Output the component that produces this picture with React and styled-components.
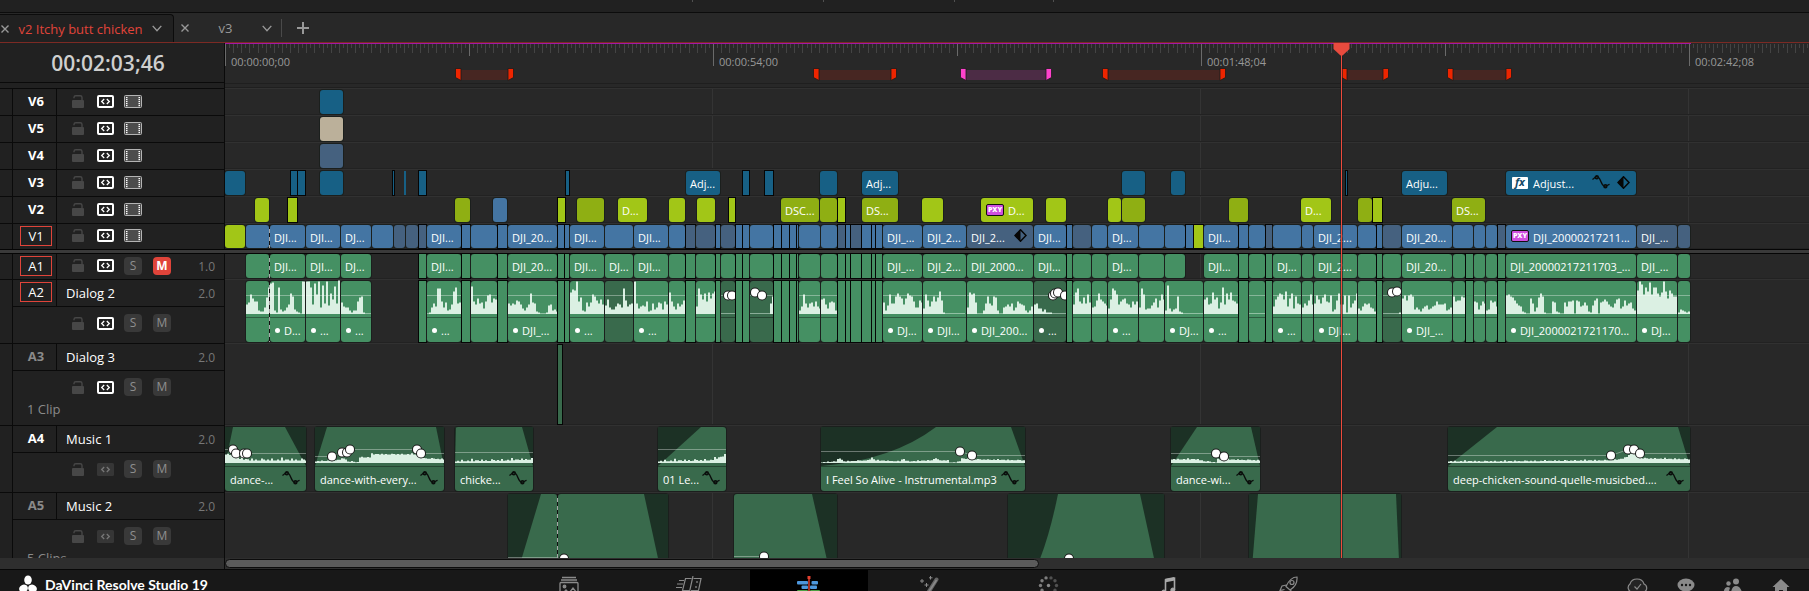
import React from "react";
import styled, { createGlobalStyle, css } from "styled-components";

const HEAD = 225;

const tones = {
  teal: "#176085",
  blue: "#4475a3",
  slate: "#45617f",
  lime: "#a2c617",
  olive: "#8faf13",
  sand: "#bbb09a",
  green: "#459063",
  forest: "#396a4c",
};

/* ---------- timeline data: x positions in pixels at the current zoom ---------- */

const clip = (start, end, tone, label, extra = {}) => ({ start, end, tone, label, ...extra });
const thin = (start, end, tone) => ({ start, end, tone, thin: true });

const V6 = [clip(320, 343, "teal")];
const V5 = [clip(320, 343, "sand")];
const V4 = [clip(320, 343, "slate")];

const V3 = [
  clip(225, 245, "teal"), thin(291, 297, "teal"), thin(298, 305, "teal"), clip(320, 343, "teal"),
  thin(393, 394, "teal"), { start: 404, end: 406, tone: "teal", bare: true }, thin(419, 426, "teal"),
  thin(566, 569, "teal"), clip(686, 720, "teal", "Adj..."), thin(743, 749, "teal"), thin(765, 773, "teal"),
  clip(820, 837, "teal"), clip(862, 898, "teal", "Adj..."), clip(1122, 1145, "teal"), clip(1171, 1185, "teal"),
  thin(1346, 1347, "teal"), clip(1402, 1447, "teal", "Adju..."),
  clip(1506, 1636, "teal", "Adjust...", { badge: "fx", curve: true, keyed: true }),
];

const V2 = [
  clip(255, 269, "lime"), thin(288, 297, "lime"), clip(455, 470, "olive"), clip(493, 507, "blue"),
  thin(558, 565, "lime"), clip(577, 604, "olive"), clip(618, 647, "lime", "D..."), clip(669, 685, "lime"),
  clip(697, 715, "lime"), thin(729, 735, "lime"), clip(781, 819, "olive", "DSC..."), clip(820, 837, "olive"),
  thin(838, 845, "lime"), clip(862, 898, "olive", "DS..."), clip(922, 943, "lime"),
  clip(981, 1033, "lime", "D...", { badge: "PXY" }), clip(1046, 1066, "lime"), clip(1108, 1121, "lime"),
  clip(1122, 1145, "olive"), clip(1229, 1248, "olive"), clip(1301, 1331, "lime", "D..."),
  clip(1358, 1372, "olive"), thin(1373, 1382, "lime"), clip(1452, 1485, "olive", "DS..."),
];

const V1 = [
  clip(225, 245, "lime"), clip(246, 269, "blue", "", { through: true }), clip(270, 305, "blue", "DJI..."),
  clip(306, 340, "blue", "DJI..."), clip(341, 371, "blue", "DJ..."), clip(372, 393, "blue"),
  clip(394, 405, "slate"), clip(406, 418, "slate"), thin(419, 426, "slate"), clip(427, 461, "blue", "DJI..."),
  thin(462, 470, "blue"), clip(471, 497, "blue"), thin(498, 507, "blue"), clip(508, 557, "blue", "DJI_20..."),
  thin(558, 564, "blue"), thin(565, 569, "blue"), clip(570, 604, "blue", "DJI..."), clip(605, 633, "blue"),
  clip(634, 668, "blue", "DJI..."), clip(669, 685, "blue"), thin(686, 695, "slate"), clip(696, 715, "slate"),
  thin(716, 720, "blue"), clip(721, 735, "slate"), thin(736, 742, "blue"), thin(743, 749, "blue"),
  clip(750, 773, "blue"), thin(774, 781, "blue"), thin(782, 789, "blue"), thin(790, 796, "blue"),
  thin(797, 798, "blue"), clip(799, 820, "blue"), clip(821, 837, "blue"), thin(838, 845, "slate"),
  thin(846, 850, "blue"), thin(851, 861, "slate"), thin(862, 871, "blue"), thin(872, 875, "blue"),
  thin(876, 882, "blue"), clip(883, 922, "blue", "DJI_..."), clip(923, 966, "blue", "DJI_2..."),
  clip(967, 1033, "slate", "DJI_2...", { keyed: true }), clip(1034, 1066, "blue", "DJI..."),
  thin(1067, 1072, "blue"), clip(1073, 1091, "slate"), clip(1092, 1107, "blue"), clip(1108, 1138, "blue", "DJ..."),
  clip(1139, 1164, "blue"), clip(1165, 1185, "blue"), thin(1186, 1193, "blue"), thin(1194, 1203, "lime"),
  clip(1204, 1238, "blue", "DJI..."), thin(1239, 1248, "blue"), clip(1249, 1265, "blue"),
  thin(1266, 1272, "slate"), clip(1273, 1301, "blue"), clip(1302, 1313, "blue"),
  clip(1314, 1357, "blue", "DJI_2..."), clip(1358, 1376, "blue"), thin(1377, 1382, "blue"),
  clip(1383, 1401, "slate"), clip(1402, 1452, "blue", "DJI_20..."), clip(1453, 1473, "blue"),
  clip(1474, 1485, "blue"), clip(1486, 1497, "blue"), thin(1498, 1505, "slate"),
  clip(1506, 1636, "blue", "DJI_20000217211...", { badge: "PXY" }), clip(1637, 1677, "slate", "DJI_..."),
  clip(1678, 1690, "slate"),
];

/* Dialog takes: [start, end, wave, A1 label, A2 label, extra]; no wave means a sliver. */
const takes = [
  [246, 269, "9bjfcc3226gq", "", "", { through: true }],
  [270, 305, "uv31q42369kh4210wwhw", "DJI...", "D..."],
  [306, 340, "wwq9ujw6saw8keraxnqr", "DJI...", "..."],
  [341, 371, "b7663133cgh100000", "DJ...", "..."],
  [419, 426],
  [427, 461, "016a7ppc6b349mqabt", "DJI...", "..."],
  [462, 470],
  [471, 497, "rc9fab5cijbfe"],
  [498, 507],
  [508, 557, "a8a9dc95369kba21000189342", "DJI_20...", "DJI_..."],
  [558, 564], [565, 569],
  [570, 604, "lonwcg32b7bjhdae9", "DJI...", "..."],
  [605, 633, "8e6447a96pd79a", "DJ...", "", { dim: true }],
  [634, 668, "wa5787c23a46ba4c9", "DJI...", "..."],
  [669, 685, "lc74a79d"],
  [686, 695],
  [696, 715, "7pjekclfkm"],
  [716, 720],
  [721, 735, "0000000", "", "", { dim: true, dots: [[728, 14], [732, 14]] }],
  [736, 742], [743, 749],
  [750, 773, "0000000000ahw", "", "", { dim: true, dots: [[755, 11], [762, 14]] }],
  [774, 781], [782, 789], [790, 796], [797, 798],
  [799, 820, "37ja6ab7c75"],
  [821, 837, "ef95bcb3"],
  [838, 845], [846, 850], [851, 861], [862, 871], [872, 875], [876, 882],
  [883, 922, "b38jaahkhf9fkihc66db", "DJI_...", "DJ..."],
  [923, 966, "5jd7chcgmd10000000000", "DJI_2...", "DJI..."],
  [967, 1033, "6ljkb0003aha8hg3006797a36ca983137", "DJI_2000...", "DJI_200..."],
  [1034, 1066, "9a55241110000000", "DJI...", "...", { dim: true, dots: [[1053, 14], [1055, 12], [1058, 11], [1065, 14]] }],
  [1067, 1072],
  [1073, 1091, "9lpcagajb"],
  [1092, 1107, "67dkeca8"],
  [1108, 1138, "5epnj9cefa96c9c", "DJ...", "..."],
  [1139, 1164, "6pj4558bf6dje"],
  [1165, 1203, "3s5245h2100000000000", "", "DJ...", { shortEnd: 1185 }],
  [1204, 1238, "eg9aleg5bq9keldca", "DJI...", "..."],
  [1239, 1248],
  [1249, 1265, "00000000"],
  [1266, 1272],
  [1273, 1301, "7ehkjem7fk5ha9", "DJ...", "..."],
  [1302, 1313, "6a8dj9"],
  [1314, 1357, "aieagjcbi24dk99i1i6adk", "DJI_2...", "DJI..."],
  [1358, 1376, "537a9a652"],
  [1377, 1382],
  [1383, 1401, "000000001", "", "", { dim: true, dots: [[1392, 11], [1397, 10]] }],
  [1402, 1452, "fidijh46425784578c999a346", "DJI_20...", "DJI_..."],
  [1453, 1465, "hcddhg"],
  [1466, 1473],
  [1474, 1485, "cb48ca"],
  [1486, 1497, "34dbc7"],
  [1498, 1505],
  [1506, 1636, "ijhgda872100fa26gkh1000cb2100b7ccd0dc78b8218df0bcec976aef57d8ab53", "DJI_20000217211703_...", "DJI_2000021721170..."],
  [1637, 1677, "nwtjqmvjqqkhlwmfnkhh", "DJI_...", "DJ..."],
  [1678, 1690, "143212"],
];

const A1 = takes.map(([start, end, wave, label, , extra = {}]) =>
  wave ? clip(start, extra.shortEnd || end, "green", label, { through: extra.through }) : thin(start, end, "green"));

const A2 = takes.map(([start, end, wave, , label, extra = {}]) =>
  wave
    ? clip(start, end, extra.dim ? "forest" : "green", label, {
        bullet: Boolean(label), through: extra.through,
        audio: { height: 36, base: 33, bars: [...wave].map((c) => parseInt(c, 36)), level: [[start, 14], [end, 14]], dots: extra.dots },
      })
    : thin(start, end, "green"));

const A3 = [thin(558, 562, "forest")];

/* A music bed's bars: an envelope of [x, height] points with a little ripple on top. */
const ripple = [0, 1, 0, 2, 0, 0, 1, 0, 3, 0, 1, 1, 0, 2, 0, 1, 0, 0, 2, 1];
const bed = (points, rough = 1) => {
  const out = [];
  for (let x = points[0][0], i = 0; x < points[points.length - 1][0]; x += 2, i += 1) {
    const k = points.findIndex((p) => p[0] > x);
    const [x0, h0] = points[k - 1];
    const [x1, h1] = points[k];
    out.push(h0 + ((h1 - h0) * (x - x0)) / (x1 - x0) + ripple[i % ripple.length] * rough);
  }
  return out;
};
const music = (start, end, label, audio) =>
  clip(start, end, "forest", label, { curve: true, audio: { height: 39, base: 36, ...audio } });

const A4 = [
  music(225, 306, "dance-...", {
    bars: bed([[225, 8], [232, 7], [240, 3], [250, 2], [306, 2]]), fadeIn: 8, fadeOut: 21,
    level: [[225, 22], [233, 22], [236, 26], [306, 26]], dots: [[233, 22], [236, 26], [244, 26], [247, 26]],
  }),
  music(315, 444, "dance-with-every...", {
    bars: bed([[315, 1], [336, 2], [343, 4], [347, 1], [357, 0], [358, 5], [369, 5], [370, 8], [414, 8], [424, 4], [444, 3]], 0.4),
    fadeIn: 12, fadeOut: 8,
    level: [[315, 29], [332, 29], [342, 25], [350, 22], [417, 22], [422, 26], [444, 26]],
    dots: [[332, 29], [342, 25], [347, 25], [350, 22], [417, 22], [421, 26]],
  }),
  music(455, 533, "chicke...", { bars: bed([[455, 1], [510, 2], [533, 3]], 0.8), fadeIn: 1, fadeOut: 11, level: [[455, 25], [533, 25]] }),
  music(658, 726, "01 Le...", { bars: bed([[658, 1], [710, 2], [720, 5], [724, 7], [726, 1]], 0.8), fadeIn: 43, fadeOut: 0, level: [[658, 22], [726, 22]] }),
  music(821, 1025, "I Feel So Alive - Instrumental.mp3", {
    bars: bed([[821, 0], [835, 1], [839, 4], [843, 1], [868, 2], [871, 5], [874, 2], [899, 1], [902, 4], [906, 1], [932, 2], [934, 5], [938, 2], [948, 2], [949, 0], [958, 0], [961, 4], [970, 3], [1025, 2]], 0.3),
    fadeIn: 115, bend: true, fadeOut: 14,
    level: [[821, 24], [960, 24], [973, 28], [1025, 28]], dots: [[960, 24], [972, 28]],
  }),
  music(1171, 1260, "dance-wi...", {
    bars: bed([[1171, 3], [1196, 3], [1204, 1], [1215, 0], [1216, 3], [1260, 2]], 0.4), fadeIn: 26, fadeOut: 9,
    level: [[1171, 26], [1216, 26], [1224, 29], [1260, 29]], dots: [[1216, 26], [1224, 29]],
  }),
  music(1448, 1690, "deep-chicken-sound-quelle-musicbed....", {
    bars: bed([[1448, 1], [1500, 1], [1610, 2], [1624, 4], [1632, 10], [1642, 4], [1690, 3]], 0.4), fadeIn: 49, fadeOut: 12,
    level: [[1448, 28], [1611, 28], [1628, 22], [1634, 22], [1640, 26], [1690, 26]],
    dots: [[1611, 28], [1628, 22], [1634, 22], [1640, 26]],
  }),
];

const score = (start, end, audio, extra = {}) => clip(start, end, "forest", "", { audio: { height: 110, base: 106, bars: [], ...audio }, ...extra });
const A5 = [
  score(508, 557, { fadeIn: 33, fadeOut: 0, level: [[508, 63], [557, 63]] }, { through: true }),
  score(558, 668, { fadeIn: 0, fadeOut: 24, dots: [[564, 64]] }),
  score(734, 837, { fadeIn: 0, fadeOut: 25, level: [[734, 62], [764, 62]], dots: [[764, 62]] }),
  score(1008, 1164, { fadeIn: 50, bend: true, fadeOut: 24, dots: [[1069, 64]] }),
  score(1249, 1401, { fadeIn: 9, fadeOut: 5 }),
];

const tracks = [
  { id: "V6", kind: "video", size: 27, clips: V6 },
  { id: "V5", kind: "video", size: 27, clips: V5 },
  { id: "V4", kind: "video", size: 27, clips: V4 },
  { id: "V3", kind: "video", size: 27, clips: V3 },
  { id: "V2", kind: "video", size: 27, clips: V2 },
  { id: "V1", kind: "video", size: 26, clips: V1, armed: true },
];
const audioTracks = [
  { id: "A1", kind: "compact", size: 25, clips: A1, armed: true, muted: true, channels: "1.0" },
  { id: "A2", name: "Dialog 2", size: 64, clips: A2, armed: true, channels: "2.0" },
  { id: "A3", name: "Dialog 3", size: 82, clips: A3, faded: true, channels: "2.0", note: "1 Clip" },
  { id: "A4", name: "Music 1", size: 67, clips: A4, unlinked: true, channels: "2.0" },
  { id: "A5", name: "Music 2", size: 114, clips: A5, faded: true, unlinked: true, channels: "2.0", note: "5 Clips" },
];

const ranges = [
  { start: 455, end: 514 }, { start: 813, end: 897 }, { start: 960, end: 1052, pink: true },
  { start: 1102, end: 1226 }, { start: 1341, end: 1389 }, { start: 1447, end: 1512 },
];

const stamps = ["00:00:00;00", "00:00:54;00", "00:01:48;04", "00:02:42;08"];

/* ---------- styles ---------- */

const GlobalStyle = createGlobalStyle`
  * { box-sizing: border-box; }
  body { margin: 0; background: #282828; overflow: hidden; font-family: "Open Sans", "Noto Sans", sans-serif; color: #fff; }
  button { margin: 0; padding: 0; border: 0; background: none; font: inherit; color: inherit; }
  svg { display: block; flex: none; }
`;

const Shell = styled.div`
  display: flex;
  flex-direction: column;
  height: 100vh;
  overflow: hidden;
`;

const ToolStrip = styled.div`
  flex: none;
  display: flex;
  height: 13px;
  background: #212121;
  border-bottom: 1px solid #0c0c0c;
`;

const ToolMark = styled.span`
  width: 1px;
  height: 2px;
  background: #505050;
  margin-left: ${(p) => p.$gap}px;
`;

const TabBar = styled.nav`
  flex: none;
  display: flex;
  align-items: stretch;
  height: 30px;
  padding-top: 1px;
  border-bottom: 1px solid #7c2a24;
  background: #282828;
`;

const Tab = styled.div`
  display: flex;
  align-items: center;
  justify-content: space-between;
  padding: 0 ${(p) => (p.$active ? 11 : 9)}px 0 ${(p) => (p.$active ? 1 : 7)}px;
  width: ${(p) => (p.$active ? 174 : 107)}px;
  font-size: 13px;
  color: ${(p) => (p.$active ? "#e0443a" : "#999")};
  ${(p) => p.$active && css`
    background: #212121;
    border: 1px solid #0c0c0c;
    border-width: 1px 1px 0 0;
    border-radius: 0 4px 0 0;
  `}
`;

const TabIcon = styled.button`
  color: #999;
`;

const AddTab = styled.button`
  align-self: center;
  padding: 3px 15px;
  border-left: 1px solid #4a4a4a;
  color: #999;
`;

const Timeline = styled.main`
  position: relative;
  flex: 1;
  min-height: 0;
  overflow: hidden;
`;

const Row = styled.div`
  display: flex;
  height: ${(p) => p.$size}px;
`;

const RowHead = styled.div`
  flex: none;
  width: ${HEAD}px;
  background: #212121;
  border-right: 1px solid #0a0a0a;
`;

const Timecode = styled.output`
  display: flex;
  align-items: center;
  justify-content: center;
  height: 40px;
  padding-right: 8px;
  border-bottom: 1px solid #0a0a0a;
  font-size: 21px;
  font-weight: 600;
  color: #cfcfcf;
`;

const RulerArea = styled.div`
  flex: 1;
  min-width: 0;
  overflow: hidden;
  border-bottom: 1px solid #1f1f1f;
`;

const Ruler = styled.div`
  position: relative;
  height: 41px;
  border-bottom: 1px solid #1f1f1f;
`;

const RulerMarks = styled.svg`
  position: absolute;
  inset: 0;
`;

const Stamps = styled.div`
  display: flex;
  padding-top: 11px;
`;

const Stamp = styled.span`
  flex: none;
  width: 488px;
  padding-left: 6px;
  font-size: 11px;
  line-height: 16px;
  color: #989898;
`;

const TrackHead = styled.div`
  flex: none;
  display: flex;
  width: ${HEAD}px;
  overflow: hidden;
  background: #212121;
  border-right: 1px solid #0a0a0a;
  border-top: ${(p) => (p.$flush ? 0 : 1)}px solid #0a0a0a;
`;

const Gutter = styled.div`
  flex: none;
  width: 13px;
  border-right: 1px solid #0a0a0a;
`;

const HeadBody = styled.div`
  flex: 1;
  display: flex;
  flex-direction: column;
`;

const HeadLine = styled.div`
  display: flex;
  flex: ${(p) => (p.$named ? "none" : "1")};
  height: ${(p) => (p.$named ? "27px" : "auto")};
  border-bottom: ${(p) => (p.$named ? 1 : 0)}px solid #0a0a0a;
`;

const IdCell = styled.div`
  flex: none;
  display: flex;
  align-items: center;
  justify-content: center;
  width: 44px;
  padding: 0 0 2px 3px;
  border-right: 1px solid #0a0a0a;
`;

const TrackId = styled.button`
  width: 32px;
  height: 20px;
  line-height: 18px;
  font-size: 13px;
  font-weight: ${(p) => (p.$armed ? 500 : 700)};
  color: ${(p) => (p.$faded ? "#8a8a8a" : "#fff")};
  border: 1px solid ${(p) => (p.$armed ? "#e0443a" : "transparent")};
`;

const NameCell = styled.div`
  flex: 1;
  display: flex;
  align-items: center;
  justify-content: space-between;
  padding: 0 9px;
  font-size: 13px;
`;

const Channels = styled.span`
  align-self: center;
  padding-right: ${(p) => (p.$inline ? 9 : 0)}px;
  font-size: 12px;
  color: #777;
`;

const Controls = styled.div`
  display: flex;
  align-items: center;
  flex: ${(p) => (p.$inline ? 1 : "none")};
  height: ${(p) => (p.$inline ? "auto" : "34px")};
  padding: 0 8px 2px ${(p) => (p.$inline ? 15 : 59)}px;
`;

const Control = styled.button`
  margin-right: ${(p) => p.$gap}px;
`;

const LetterButton = styled.button`
  width: 18px;
  height: 18px;
  margin-right: 11px;
  border-radius: 4px;
  font-size: 12px;
  line-height: 18px;
  text-align: center;
  font-weight: ${(p) => (p.$on ? 700 : 500)};
  color: ${(p) => (p.$on ? "#fff" : "#8f8f8f")};
  background: ${(p) => (p.$on ? "#e0443a" : "#393939")};
`;

const SubPanel = styled.div`
  display: flex;
  flex-direction: column;
`;

const Note = styled.span`
  padding-left: 14px;
  margin-top: -5px;
  font-size: 13px;
  line-height: 18px;
  color: #8a8a8a;
`;

const Lane = styled.div`
  flex: 1;
  min-width: 0;
  display: flex;
  align-items: flex-start;
  overflow: hidden;
  padding: ${(p) => (p.$flush ? "0 0 1px" : "1px 0")};
  border-top: ${(p) => (p.$flush ? 0 : 1)}px solid #313131;
  box-shadow: inset 0 -1px #222;
  background: repeating-linear-gradient(90deg, transparent 0 487px, #343434 487px 488px);
`;

const ClipBox = styled.div`
  position: relative;
  flex: none;
  display: flex;
  flex-direction: column;
  height: 100%;
  background: ${(p) => tones[p.$tone]};
  border-radius: ${(p) => (p.$square ? 0 : 3)}px;
  box-shadow: ${(p) => (p.$bare ? "none" : `0 0 0 1px ${p.$square ? "#050505" : "#1b1f1d"}`)};
  ${(p) => p.$through && css`
    z-index: 1;
    &::after {
      content: "";
      position: absolute;
      inset: 0 -1px 0 auto;
      width: 1px;
      background: repeating-linear-gradient(#111 0 4px, #a8a8a8 4px 8px);
    }
  `}
`;

const ClipLabel = styled.div`
  display: flex;
  align-items: center;
  height: 24px;
  padding: 1px 6px 0 ${(p) => (p.$roomy ? 5 : 4)}px;
  overflow: hidden;
  white-space: nowrap;
  font-size: 11px;
  line-height: 15px;
  font-weight: 500;
  color: #fff;
`;

const WaveEdge = styled.div`
  flex: none;
  height: 1px;
  background: rgba(0, 0, 0, 0.35);
`;

const ClipText = styled.span`
  flex: 1;
`;

const Bullet = styled.i`
  flex: none;
  width: 5px;
  height: 5px;
  margin: 0 4px 0 1px;
  border-radius: 50%;
  background: #fff;
`;

const Mark = styled.span`
  flex: none;
  margin: 0 0 3px ${(p) => p.$gap}px;
`;

const ProxyBadge = styled.span`
  flex: none;
  width: 18px;
  height: 12px;
  margin: 0 4px 2px 1px;
  border: 1px solid #101010;
  border-radius: 2px;
  background: #d04fdf;
  font-size: 7px;
  font-weight: 800;
  line-height: 10px;
  text-align: center;
`;

const FxBadge = styled.span`
  flex: none;
  width: 16px;
  height: 12px;
  margin: 0 5px 2px 2px;
  border-radius: 1px;
  background: #fff;
  color: #154a66;
  font-size: 11px;
  font-style: italic;
  font-weight: 700;
  line-height: 10px;
  text-align: center;
`;

const Splitter = styled.div`
  height: 5px;
  background: #3a3a3a;
  border: 1px solid #050505;
  border-width: 1px 0;
`;

const Playhead = styled.svg`
  position: absolute;
  z-index: 2;
  top: 0;
  left: 1333px;
  height: 100%;
`;

const ScrollRow = styled.div`
  flex: none;
  display: flex;
  height: 11px;
  background: #2e2e2e;
`;

const ScrollCorner = styled.div`
  width: ${HEAD}px;
  border-right: 1px solid #0a0a0a;
`;

const ScrollTrack = styled.div`
  flex: 1;
  padding: 1px 0;
`;

const ScrollThumb = styled.div`
  width: 814px;
  height: 9px;
  border: 1px solid #0c0c0c;
  border-radius: 5px;
  background: #5b5b5b;
`;

const PageBar = styled.footer`
  flex: none;
  display: flex;
  height: 22px;
  overflow: hidden;
  background: #181818;
  border-top: 1px solid #070707;
`;

const Brand = styled.div`
  flex: 0 0 509px;
  display: flex;
  align-items: flex-start;
  gap: 8px;
  padding: 5px 0 0 19px;
  white-space: nowrap;
`;

const BrandName = styled.span`
  font: 700 14px/20px Lato, "Open Sans", sans-serif;
`;

const PageButton = styled.button`
  flex: none;
  width: 118px;
  margin: 0 1px;
  display: flex;
  justify-content: center;
  align-items: flex-start;
  padding-top: 6px;
  height: 40px;
  color: #8a8a8a;
  background: ${(p) => (p.$active ? "#000" : "none")};
`;

const Utility = styled.div`
  flex: 1;
  display: flex;
  justify-content: flex-end;
  align-items: flex-start;
  gap: 25px;
  padding: 8px 16px 0 0;
  color: #8a8a8a;
`;

/* ---------- icons ---------- */

const CloseIcon = () => (
  <svg width="8" height="8" stroke="currentColor" strokeWidth="1.4"><path d="M.5.5l7 7M7.5.5l-7 7" /></svg>
);
const ChevronIcon = () => (
  <svg width="10" height="7" fill="none" stroke="currentColor" strokeWidth="1.4"><path d="M.7.9L5 5.6 9.3.9" /></svg>
);
const PlusIcon = () => (
  <svg width="12" height="12" stroke="currentColor" strokeWidth="2"><path d="M6 0v12M0 6h12" /></svg>
);
const LockIcon = () => (
  <svg width="12" height="13" fill="#474747">
    <rect y="5" width="12" height="8" rx="1" />
    <path d="M2 3.2V2.4C2 1.4 2.8.8 3.8.8h4.4c1 0 1.8.6 1.8 1.6V5.5" fill="none" stroke="#474747" strokeWidth="1.4" />
  </svg>
);
const LinkIcon = ({ off }) => (
  <svg width="17" height="13" fill="none">
    {off ? <rect width="17" height="13" rx="1.5" fill="#363636" /> : <rect x="1" y="1" width="15" height="11" rx="1" stroke="#fff" strokeWidth="2" />}
    <path d="M7.2 4L4.7 6.5 7.2 9M9.8 4l2.5 2.5L9.8 9" stroke={off ? "#777" : "#fff"} strokeWidth="1.3" />
  </svg>
);
const FilmIcon = () => (
  <svg width="18" height="13">
    <rect x=".5" y=".5" width="17" height="12" rx="1" fill="#4c4c4c" stroke="#b4b4b4" />
    {[2, 4, 6, 8, 10].map((y) => (
      <g key={y} fill="#fff"><rect x="2" y={y} width="1.5" height="1.2" /><rect x="14.5" y={y} width="1.5" height="1.2" /></g>
    ))}
  </svg>
);
const CurveIcon = () => (
  <svg width="18" height="14" fill="none" stroke="#0a0d0b" strokeWidth="1.4">
    <path d="M.4 4.4C2 4 2.6 2 4.6 1.6 8.6 1 8.6 10 12.4 11.2 14.4 11.6 16 9.6 17.600 9.4" />
    <circle cx="4.8" cy="2.3" r="1.5" /><circle cx="13.4" cy="11.2" r="1.5" />
  </svg>
);
const KeyIcon = () => (
  <svg width="13" height="13">
    <path d="M6.5.8l5.5 5.7-5.5 5.7L1 6.5z" fill="none" stroke="#060606" strokeWidth="1.5" />
    <path d="M6.5.8v11.4L1 6.5z" fill="#060606" />
  </svg>
);

/* ---------- pieces ---------- */

function Wave({ start, end, audio }) {
  const { height, base, bars = [], level, dots = [], fadeIn = 0, fadeOut = 0, bend } = audio;
  const w = end - start;
  const shape = bars.map((h, i) => `V${base - 0.5 - h}H${Math.min((i + 1) * 2, w)}`).join("");
  const rise = bend ? `Q${fadeIn * 0.62} ${height * 0.85} ${fadeIn} 0` : `L${fadeIn} 0`;
  return (
    <svg width={w} height={height} overflow="visible">
      {fadeIn > 0 && <path d={`M0 0V${height}${rise}Z`} fill="#1c3125" />}
      {fadeOut > 0 && <path d={`M${w} 0V${height}L${w - fadeOut} 0Z`} fill="#1c3125" />}
      {bars.length > 0 && <path d={`M0 ${base}${shape}V${base}Z`} fill="#dbf0e3" />}
      {level && (
        <polyline points={level.map(([x, y]) => `${x - start},${y + 0.5}`).join(" ")} fill="none" stroke="#fff" strokeOpacity=".35" />
      )}
      {dots.map(([x, y]) => (
        <circle key={x} cx={x - start} cy={y + 0.5} r="4" fill="#fff" stroke="#1c1c1c" strokeWidth="2" paintOrder="stroke" />
      ))}
    </svg>
  );
}

function Clip({ data, offset }) {
  const { start, end, tone, label, audio } = data;
  return (
    <ClipBox
      $tone={tone}
      $square={data.thin || data.bare}
      $bare={data.bare}
      $through={data.through}
      style={{ width: end - start, marginLeft: start - offset }}
    >
      {audio && <Wave start={start} end={end} audio={audio} />}
      {audio && <WaveEdge />}
      {label && (
        <ClipLabel $roomy={audio && data.curve}>
          {data.badge === "PXY" && <ProxyBadge>PXY</ProxyBadge>}
          {data.badge === "fx" && <FxBadge>fx</FxBadge>}
          {data.bullet && <Bullet />}
          <ClipText>{label}</ClipText>
          {data.curve && <Mark $gap={0}><CurveIcon /></Mark>}
          {data.keyed && <Mark $gap={data.curve ? 7 : 0}><KeyIcon /></Mark>}
        </ClipLabel>
      )}
    </ClipBox>
  );
}

function TrackControls({ track }) {
  const video = track.kind === "video";
  return (
    <Controls $inline={video || track.kind === "compact"}>
      <Control $gap={13} aria-label={`Lock ${track.id}`}><LockIcon /></Control>
      <Control $gap={10} aria-label={`Auto select ${track.id}`}><LinkIcon off={track.unlinked} /></Control>
      {video ? (
        <Control $gap={0} aria-label={`Enable ${track.id}`}><FilmIcon /></Control>
      ) : (
        <>
          <LetterButton aria-label={`Solo ${track.id}`}>S</LetterButton>
          <LetterButton aria-label={`Mute ${track.id}`} $on={track.muted}>M</LetterButton>
        </>
      )}
    </Controls>
  );
}

function Track({ track }) {
  const named = Boolean(track.name);
  const flush = track.kind === "compact";
  return (
    <Row $size={track.size}>
      <TrackHead $flush={flush}>
        <Gutter />
        <HeadBody>
          <HeadLine $named={named}>
            <IdCell>
              <TrackId $armed={track.armed} $faded={track.faded}>{track.id}</TrackId>
            </IdCell>
            {named ? (
              <NameCell>
                <span>{track.name}</span>
                <Channels>{track.channels}</Channels>
              </NameCell>
            ) : (
              <TrackControls track={track} />
            )}
            {flush && <Channels $inline>{track.channels}</Channels>}
          </HeadLine>
          {named && (
            <SubPanel>
              <TrackControls track={track} />
              {track.note && <Note>{track.note}</Note>}
            </SubPanel>
          )}
        </HeadBody>
      </TrackHead>
      <Lane $flush={flush}>
        {track.clips.map((c, i) => (
          <Clip key={c.start} data={c} offset={i ? track.clips[i - 1].end : HEAD} />
        ))}
      </Lane>
    </Row>
  );
}

function RulerScale() {
  const ticks = Array.from({ length: 391 }, (_, i) => ({
    i,
    x: Math.round((i * 488) / 120),
    h: i % 120 === 0 ? 22 : i % 60 === 0 ? 12 : i % 2 === 0 ? 9 : 4,
  }));
  return (
    <RulerMarks width="100%" height="40">
      {ticks.map(({ i, x, h }) => (
        <rect key={i} x={x} y="1" width="1" height={h} fill={i % 60 === 0 ? "#6a6a6a" : "#444"} />
      ))}
      <rect width="1466" height="1" fill="#a318a6" />
      {ranges.map(({ start, end, pink }) => (
        <g key={start} transform={`translate(${start - HEAD} 25)`}>
          <rect x="6" y="2" width={end - start - 12} height="10" fill={pink ? "#4c2c45" : "#472622"} />
          <g fill={pink ? "#ff42cc" : "#ee2500"} stroke="#1a1a1a" strokeWidth=".8">
            <path d="M.5.5h5.5v12L.5 9.5z" />
            <path d={`M${end - start - 0.5}.5h-5.5v12l5.5-3z`} />
          </g>
        </g>
      ))}
    </RulerMarks>
  );
}

const pageIcons = {
  Media: (
    <svg width="20" height="24" fill="none" stroke="currentColor" strokeWidth="1.3">
      <path d="M3 1.5h14M2 4h16" /><rect x="1" y="6.5" width="18" height="16" rx="1" />
      <circle cx="5.5" cy="10.5" r="1.3" fill="currentColor" /><path d="M3 18l4-4 3 3 4-5 4 5" />
    </svg>
  ),
  Cut: (
    <svg width="26" height="20" fill="none" stroke="currentColor" strokeWidth="1.2">
      <path d="M15.500 2.500H9.500L6.500 14.500h7M17.500 2.500H25l-2.500 12H15M17 0l-4 18M3 4.500H8M1 8h6M0 11.500h6M21 5v2M20 10v2" />
    </svg>
  ),
  Edit: (
    <svg width="24" height="22">
      <g fill="#4d97dd"><rect x="0" y="5" width="11" height="3.5" rx="1" /><rect x="14.5" y="5" width="6.5" height="3.5" rx="1" />
        <rect x="4.5" y="9.5" width="6.5" height="3.5" rx="1" /><rect x="13" y="9.5" width="7" height="3.5" rx="1" /></g>
      <g fill="#4da143"><rect x="0" y="14" width="11" height="4" rx="1" /><rect x="13" y="14" width="10" height="4" rx="1" /></g>
      <path d="M12 2v20" stroke="#e3402f" strokeWidth="1.5" /><rect x="10.5" y="0" width="3" height="3" fill="#e3402f" />
    </svg>
  ),
  Fusion: (
    <svg width="24" height="24" fill="none" stroke="currentColor">
      <path d="M6.5 24L19.5 3.5" strokeWidth="4" stroke="#666" strokeLinecap="round" /><path d="M9 20L19.5 4" strokeWidth="1.5" />
      <path d="M5 3v4M3 5h4M13.5 0v3.5M12 1.8h3.5M9.5 7v4M7.5 9h4" strokeWidth="1" />
    </svg>
  ),
  Color: (
    <svg width="22" height="24" fill="currentColor">
      {Array.from({ length: 10 }, (_, i) => {
        const a = (i * Math.PI) / 5;
        return <circle key={i} cx={10.5 + 8 * Math.cos(a)} cy={9.5 + 8 * Math.sin(a)} r="1.7" opacity={i > 7 || i < 3 ? 0.5 : 0.9} />;
      })}
      <circle cx="10.5" cy="9.5" r="1.7" />
    </svg>
  ),
  Fairlight: (
    <svg width="16" height="20" fill="none" stroke="#a8a8a8">
      <path d="M4.5 16V4l9-1.8V14" strokeWidth="1.6" /><path d="M4.5 4.5l9-1.8" strokeWidth="3.5" />
      <circle cx="2.8" cy="16" r="2" fill="#a8a8a8" /><circle cx="11.8" cy="14" r="2" fill="#a8a8a8" />
    </svg>
  ),
  Deliver: (
    <svg width="20" height="22" fill="none" stroke="currentColor" strokeWidth="1.2">
      <path d="M18 1c-5 0-8 3-11 9.5l4 3.5C16 11 18.5 7 18 1zM7.5 9L3 10l-2 4.5 4.5-1M12 13.5L11.5 18 8 20v-4M4 15l-2.5 4" />
      <circle cx="13" cy="6.5" r="2" />
    </svg>
  ),
};

const UtilityIcons = () => (
  <>
    <svg width="24" height="18" fill="none" stroke="currentColor" strokeWidth="1.2">
      <path d="M5.5 14a4.5 4.5 0 01-1.5-8C5 2.500 7.500 1 11 1c3.500 0 6 1.500 7 5a4.300 4.300 0 010 8z" fill="#242424" /><path d="M8.500 8.500l2.500 2.500L15 6" />
    </svg>
    <svg width="22" height="18" fill="currentColor">
      <ellipse cx="11" cy="7" rx="8.5" ry="6.5" /><path d="M8 12h6l-1 5z" />
      <g fill="#181818"><circle cx="7" cy="7" r="1.2" /><circle cx="11" cy="7" r="1.2" /><circle cx="15" cy="7" r="1.2" /></g>
    </svg>
    <svg width="22" height="18" fill="currentColor">
      <circle cx="14" cy="3.5" r="3" /><circle cx="6.5" cy="5.5" r="2.2" />
      <path d="M9 16c0-5 2-8 5-8s6 3 6 8zM1.5 16c0-4 1.5-7 4.5-7l2 .8C7 12 7 14 7 16z" />
    </svg>
    <svg width="24" height="18" fill="currentColor">
      <path d="M12 1l8.5 8H18v9h-4v-6h-4v6H6V9H3.5z" />
    </svg>
  </>
);

export default function App() {
  return (
    <Shell>
      <GlobalStyle />
      <ToolStrip>
        <ToolMark $gap={692} /><ToolMark $gap={130} /><ToolMark $gap={130} /><ToolMark $gap={98} />
      </ToolStrip>
      <TabBar>
        <Tab $active>
          <TabIcon aria-label="Close v2 Itchy butt chicken"><CloseIcon /></TabIcon>
          <button>v2 Itchy butt chicken</button>
          <TabIcon aria-label="v2 Itchy butt chicken menu"><ChevronIcon /></TabIcon>
        </Tab>
        <Tab>
          <TabIcon aria-label="Close v3"><CloseIcon /></TabIcon>
          <button>v3</button>
          <TabIcon aria-label="v3 menu"><ChevronIcon /></TabIcon>
        </Tab>
        <AddTab aria-label="Add timeline"><PlusIcon /></AddTab>
      </TabBar>
      <Timeline>
        <Row $size={45}>
          <RowHead><Timecode>00:02:03;46</Timecode></RowHead>
          <RulerArea>
            <Ruler>
              <RulerScale />
              <Stamps>{stamps.map((s) => <Stamp key={s}>{s}</Stamp>)}</Stamps>
            </Ruler>
          </RulerArea>
        </Row>
        {tracks.map((t) => <Track key={t.id} track={t} />)}
        <Splitter />
        {audioTracks.map((t) => <Track key={t.id} track={t} />)}
        <Playhead width="17">
          <rect x="7" y="10" width="3" height="100%" fill="#1c1c1c" opacity=".6" />
          <rect x="8" y="10" width="1" height="100%" fill="#ee4a3c" />
          <path d="M.5 0h16v6L9.5 12.5h-2L.5 6z" fill="#e84b3e" />
        </Playhead>
      </Timeline>
      <ScrollRow>
        <ScrollCorner />
        <ScrollTrack><ScrollThumb /></ScrollTrack>
      </ScrollRow>
      <PageBar>
        <Brand>
          <svg width="18" height="22" fill="#fff">
            <ellipse cx="9" cy="5" rx="3.8" ry="4.5" />
            <ellipse cx="4.5" cy="13.5" rx="4.5" ry="3.8" transform="rotate(-28 4.5 13.5)" />
            <ellipse cx="13.5" cy="13.5" rx="4.5" ry="3.8" transform="rotate(28 13.5 13.5)" />
          </svg>
          <BrandName>DaVinci Resolve Studio 19</BrandName>
        </Brand>
        {Object.entries(pageIcons).map(([name, icon]) => (
          <PageButton key={name} aria-label={name} $active={name === "Edit"}>{icon}</PageButton>
        ))}
        <Utility><UtilityIcons /></Utility>
      </PageBar>
    </Shell>
  );
}
